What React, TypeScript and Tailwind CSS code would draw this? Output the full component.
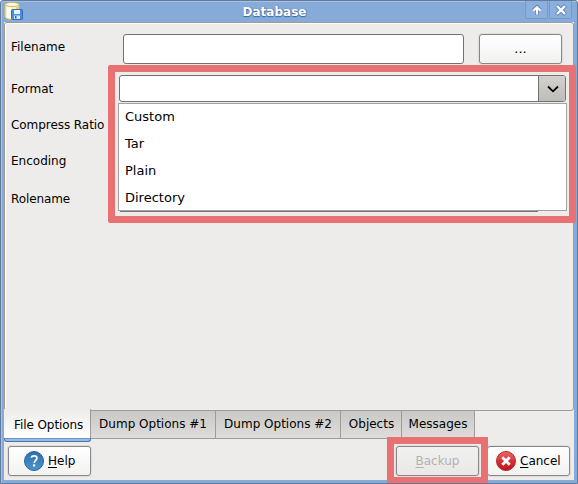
import type { ReactNode } from "react";

const formats = ["Custom", "Tar", "Plain", "Directory"];

const labels = [
  { text: "Filename", cls: "h-[42px]" },
  { text: "Format", cls: "h-[42px]" },
  { text: "Compress Ratio", cls: "h-[30px] tracking-[-0.06px]" },
  { text: "Encoding", cls: "h-[42px]" },
  { text: "Rolename", cls: "h-[34px] tracking-[-0.1px]" },
];

const tabs = [
  { text: "Dump Options #1", cls: "w-[125px]" },
  { text: "Dump Options #2", cls: "w-[125px]" },
  { text: "Objects", cls: "w-[61px] pl-px" },
  { text: "Messages", cls: "w-[73px]" },
];

function DatabaseIcon() {
  return (
    <svg width="20" height="20" viewBox="0 0 20 20" className="block shrink-0">
      <path d="M1 3.500V15.500C1 17.500 4 18.500 8 18.500s7-1 7-3V3.500Z" fill="#f7efcc" stroke="#d3b65c" />
      <path d="M3 6v10c1 .8 2 1.200 4 1.300V7Z" fill="#fffef4" />
      <path d="M13 6v9" stroke="#e2cc83" strokeWidth="2" />
      <ellipse cx="8" cy="3.500" rx="7" ry="2" fill="#fffbe5" stroke="#d3b65c" />
      <rect x="7.500" y="8.500" width="11" height="10" rx="1" fill="#4a8ddb" stroke="#2f6fbe" />
      <rect x="10" y="9" width="6" height="4" fill="#e8f3ff" />
      <rect x="10" y="14.500" width="6" height="3.500" fill="#d8e8f8" />
      <rect x="11" y="15" width="1.500" height="2.500" fill="#2464b4" />
    </svg>
  );
}

function HelpIcon() {
  return (
    <svg width="20" height="20" viewBox="0 0 20 20" className="block shrink-0">
      <defs>
        <linearGradient id="help" x2="0" y2="1"><stop stopColor="#2f6fab" /><stop offset="1" stopColor="#4c94cd" /></linearGradient>
      </defs>
      <circle cx="10" cy="10" r="9.500" fill="url(#help)" stroke="#2b639a" />
      <path d="M7.200 6.600c.5-1.300 1.500-1.800 2.900-1.800 1.700 0 2.800.9 2.800 2.300 0 2.100-2.700 2.300-2.700 4.900" fill="none" stroke="white" strokeWidth="1.700" />
      <circle cx="10.100" cy="14.400" r="1.200" fill="white" />
    </svg>
  );
}

function CancelIcon() {
  return (
    <svg width="20" height="20" viewBox="0 0 20 20" className="block shrink-0">
      <defs>
        <linearGradient id="cancel" x2="0" y2="1"><stop stopColor="#e86a6a" /><stop offset=".5" stopColor="#d63238" /><stop offset="1" stopColor="#b91420" /></linearGradient>
      </defs>
      <circle cx="10" cy="10" r="9.500" fill="url(#cancel)" stroke="#b52a31" />
      <path d="m6.300 6.300 7.400 7.400m0-7.400-7.400 7.400" stroke="white" strokeWidth="2.800" />
    </svg>
  );
}

function Button({ children, className = "" }: { children: ReactNode; className?: string }) {
  return (
    <button className={`flex h-[30px] w-[83px] shrink-0 items-center rounded-[3px] border border-[#888785] text-[12px] shadow-[0_0_0_1px_#deddda] ${className}`}>
      {children}
    </button>
  );
}

export default function App() {
  return (
    <div className="relative flex h-[484px] w-[578px] flex-col overflow-hidden rounded-t-[3px] border border-[#627b9d] bg-[#86abd9] font-['DejaVu_Sans',sans-serif] text-[12px] text-black shadow-[inset_1px_1px_0_#a8c3e5]">
      <header className="flex h-[21px] shrink-0 items-start pl-[3px]">
        <DatabaseIcon />
        <h1 className="h-[21px] flex-1 text-center text-[12px] leading-[22px] font-bold text-white [text-shadow:0_1px_1px_#3b65a0,1px_0_1px_#5078ae]">
          Database
        </h1>
        <div className="flex h-[18px] w-[52px] gap-px">
          <span className="flex w-[23px] items-center justify-center rounded-b-[2px] border border-t-0 border-[#709ad0] bg-[#8bb0de]">
            <svg width="12" height="12" viewBox="0 0 12 12" className="block"><path d="M6 11V4M2.500 6.500 6 3l3.500 3.500" fill="none" stroke="#5f86b8" strokeWidth="4" /><path d="M6 10.500V3M2.300 6.800 6 3.200l3.700 3.600" fill="none" stroke="white" strokeWidth="2.200" /></svg>
          </span>
          <span className="flex w-[23px] items-center justify-center rounded-b-[2px] border border-t-0 border-[#709ad0] bg-[#8bb0de]">
            <svg width="12" height="12" viewBox="0 0 12 12" className="block"><path d="m1.500 1.500 9 9m0-9-9 9" stroke="#5f86b8" strokeWidth="4" /><path d="m2 2 8 8m0-8-8 8" stroke="white" strokeWidth="2.400" /></svg>
          </span>
        </div>
      </header>

      <div className="mr-[3px] ml-[3px] flex h-[458px] shrink-0 flex-col bg-[#edecea]">
        <main className="flex h-[389px] shrink-0 rounded-[3px] border border-[#9e9c98] px-[6px] pt-[3px] shadow-[inset_1px_1px_0_white]">
          <div className="flex w-[112px] shrink-0 flex-col">
            {labels.map((row) => <div key={row.text} className={`flex items-center whitespace-nowrap ${row.cls}`}>{row.text}</div>)}
          </div>
          <div className="flex h-[38px] gap-[15px] pt-[8px]">
            <input aria-label="Filename" className="h-[30px] w-[341px] rounded-[3px] border border-[#737270] bg-white" />
            <Button className="justify-center bg-linear-to-b from-white via-[#f9f9f8] via-50% to-[#f0f0ef]"><span className="pb-px text-[13px]">...</span></Button>
          </div>
        </main>

        <nav className="flex h-[32px] shrink-0 items-start">
          <div className="mt-[-2px] flex h-[33px] w-[87px] flex-col">
            <div className="flex h-[29px] items-start border-r border-[#9e9c98] bg-linear-to-b from-[#edecea] to-white pt-[7px] pl-[10px] tracking-[-0.08px]">File Options</div>
            <div className="h-[4px] rounded-b-[3px] border border-t-[#6c95cb] border-[#4874af] bg-[#9abce8]" />
          </div>
          {tabs.map((tab) => (
            <div key={tab.text} className={`flex h-[28px] items-center justify-center border-r border-b border-[#9e9c98] bg-linear-to-b from-[#c9c8c5] to-[#dedddb] pb-[2px] whitespace-nowrap ${tab.cls}`}>{tab.text}</div>
          ))}
        </nav>

        <footer className="flex h-[37px] shrink-0 items-start pt-[3px] pl-[4px]">
          <Button className="bg-linear-to-b from-white to-[#f2f2f1] pl-[15px]"><HelpIcon /><span className="ml-1"><u className="underline-offset-2">H</u>elp</span></Button>
          <Button className="ml-[305px] justify-center bg-linear-to-b from-[#f1f1f0] to-[#e9e8e6] text-[#b3b2b0]"><span><u className="underline-offset-2">B</u>ackup</span></Button>
          <Button className="ml-[8px] bg-linear-to-b from-white to-[#f2f2f1] pl-[8px]"><CancelIcon /><span className="ml-1"><u className="underline-offset-2">C</u>ancel</span></Button>
        </footer>
      </div>

      <section className="absolute top-[64px] left-[107px] h-[158px] w-[468px] rounded-[2px] border-[7px] border-[#e87272] bg-[#edecea] pt-[3px] pl-[3px]">
        <div className="ml-px flex h-[27px] w-[447px] overflow-hidden rounded-[3px] border border-[#737270] bg-white">
          <div className="flex-1" />
          <div className="flex w-[27px] items-center justify-center border-l border-[#737270] bg-linear-to-b from-[#d3d1ce] to-[#bfbdba] pl-[2px]">
            <svg width="12" height="8" viewBox="0 0 12 8" className="mt-px"><path d="m1 1.500 5 4.800 5-4.800" fill="none" stroke="black" strokeWidth="1.800" /></svg>
          </div>
        </div>
        <ul className="mt-px h-[108px] w-[449px] border border-[#a3a2a0] bg-white text-[13px]">
          {formats.map((f) => <li key={f} className="flex h-[27px] items-center pb-[2px] pl-[6px]">{f}</li>)}
        </ul>
        <div className="ml-[2px] h-px w-[418px] bg-[#777674]" />
      </section>
      <div className="pointer-events-none absolute top-[436px] left-[386px] h-[47px] w-[101px] border-[7px] border-[#e87272]" />
    </div>
  );
}
